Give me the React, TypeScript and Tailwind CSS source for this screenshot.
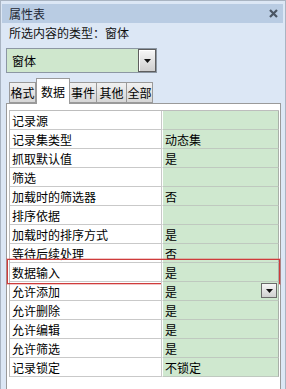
import React from "react";

const font = { fontFamily: '"Noto Sans CJK SC", "Microsoft YaHei", sans-serif' };

const rows = [
  { label: "记录源", value: "" },
  { label: "记录集类型", value: "动态集" },
  { label: "抓取默认值", value: "是" },
  { label: "筛选", value: "" },
  { label: "加载时的筛选器", value: "否" },
  { label: "排序依据", value: "" },
  { label: "加载时的排序方式", value: "是" },
  { label: "等待后续处理", value: "否" },
  { label: "数据输入", value: "是", highlight: true },
  { label: "允许添加", value: "是", dropdown: true },
  { label: "允许删除", value: "是" },
  { label: "允许编辑", value: "是" },
  { label: "允许筛选", value: "是" },
  { label: "记录锁定", value: "不锁定" },
];

const tabs = [
  { name: "格式", w: "w-[27px]" },
  { name: "数据", w: "w-[34px]", active: true },
  { name: "事件", w: "w-[28px]" },
  { name: "其他", w: "w-[31px]" },
  { name: "全部", w: "w-[27px]" },
];

function Arrow() {
  return (
    <svg width="7" height="4" viewBox="0 0 7 4">
      <path d="M0 0h7L3.5 4z" fill="#111" />
    </svg>
  );
}

export default function App() {
  return (
    <div
      style={font}
      className="flex h-[389px] w-[286px] flex-col overflow-hidden border border-b-0 border-[#a9b4c2] bg-[#dce7f5] pl-[1px] pr-[2px] pt-[3px] text-[12px] leading-none text-black"
    >
      {/* title bar */}
      <div className="flex h-[19px] shrink-0 items-center justify-between bg-[#b9cce3] pl-[7px] pr-[5px] text-[#1c2733]">
        <span>属性表</span>
        <svg width="9" height="9" viewBox="0 0 9 9">
          <path d="M1 1l7 7M8 1L1 8" stroke="#4a5563" strokeWidth="2.2" />
        </svg>
      </div>

      <div className="flex h-[19px] shrink-0 items-center pl-[7px] text-[#111]">
        所选内容的类型：窗体
      </div>

      {/* combo */}
      <div className="ml-[4px] mt-[6px] flex h-[25px] w-[151px] shrink-0 border border-[#8c97a3] bg-[#cfe7cd]">
        <div className="flex flex-1 items-center pl-[5px]">窗体</div>
        <div className="flex w-[18px] items-center justify-center border border-[#5e5e5e] bg-gradient-to-b from-[#f7f7f7] to-[#cfcfcf] shadow-[inset_1px_1px_0_#fff]">
          <Arrow />
        </div>
      </div>

      {/* tabs */}
      <div className="ml-[7px] mt-[5px] flex h-[25px] shrink-0 items-end">
        {tabs.map((t) =>
          t.active ? (
            <div
              key={t.name}
              className={`${t.w} relative z-10 -mb-px flex h-[26px] items-center justify-center border border-b-0 border-[#9a9a9a] bg-white`}
            >
              {t.name}
            </div>
          ) : (
            <div
              key={t.name}
              className={`${t.w} -ml-px flex h-[21px] items-center justify-center border border-[#9a9a9a] bg-gradient-to-b from-[#f1f1f1] to-[#d6d6d6] first:ml-0`}
            >
              {t.name}
            </div>
          ),
        )}
      </div>

      {/* panel */}
      <div className="ml-[4px] flex w-[275px] flex-1 flex-col border border-b-0 border-[#9a9a9a] bg-white pl-[2px] pt-[6px]">
        <div className="w-[270px] border-l border-t border-[#bdbdbd]">
          {rows.map((r) => (
            <div key={r.label} className="relative flex h-[19px]">
              <div className="flex w-[152px] items-center border-b border-r border-[#c9c9c9] pl-[2px] pt-px">
                {r.label}
              </div>
              <div className="flex flex-1 items-center border-b border-l border-r border-b-[#bfc9bf] border-l-white border-r-[#a8b0a8] bg-[#cfe8cf] pl-[2px] pt-px">
                {r.value}
              </div>
              {r.highlight && (
                <div className="absolute -left-[3px] -right-px -top-[4px] bottom-[-2px] border border-[#cf3b3b] shadow-[0_0_0_1px_rgba(214,90,90,0.35)]" />
              )}
              {r.dropdown && (
                <div className="absolute right-[2px] top-[1px] flex h-[15px] w-[16px] items-center justify-center border border-[#6a6a6a] bg-gradient-to-b from-[#f7f7f7] to-[#d0d0d0]">
                  <Arrow />
                </div>
              )}
            </div>
          ))}
        </div>
      </div>
    </div>
  );
}
